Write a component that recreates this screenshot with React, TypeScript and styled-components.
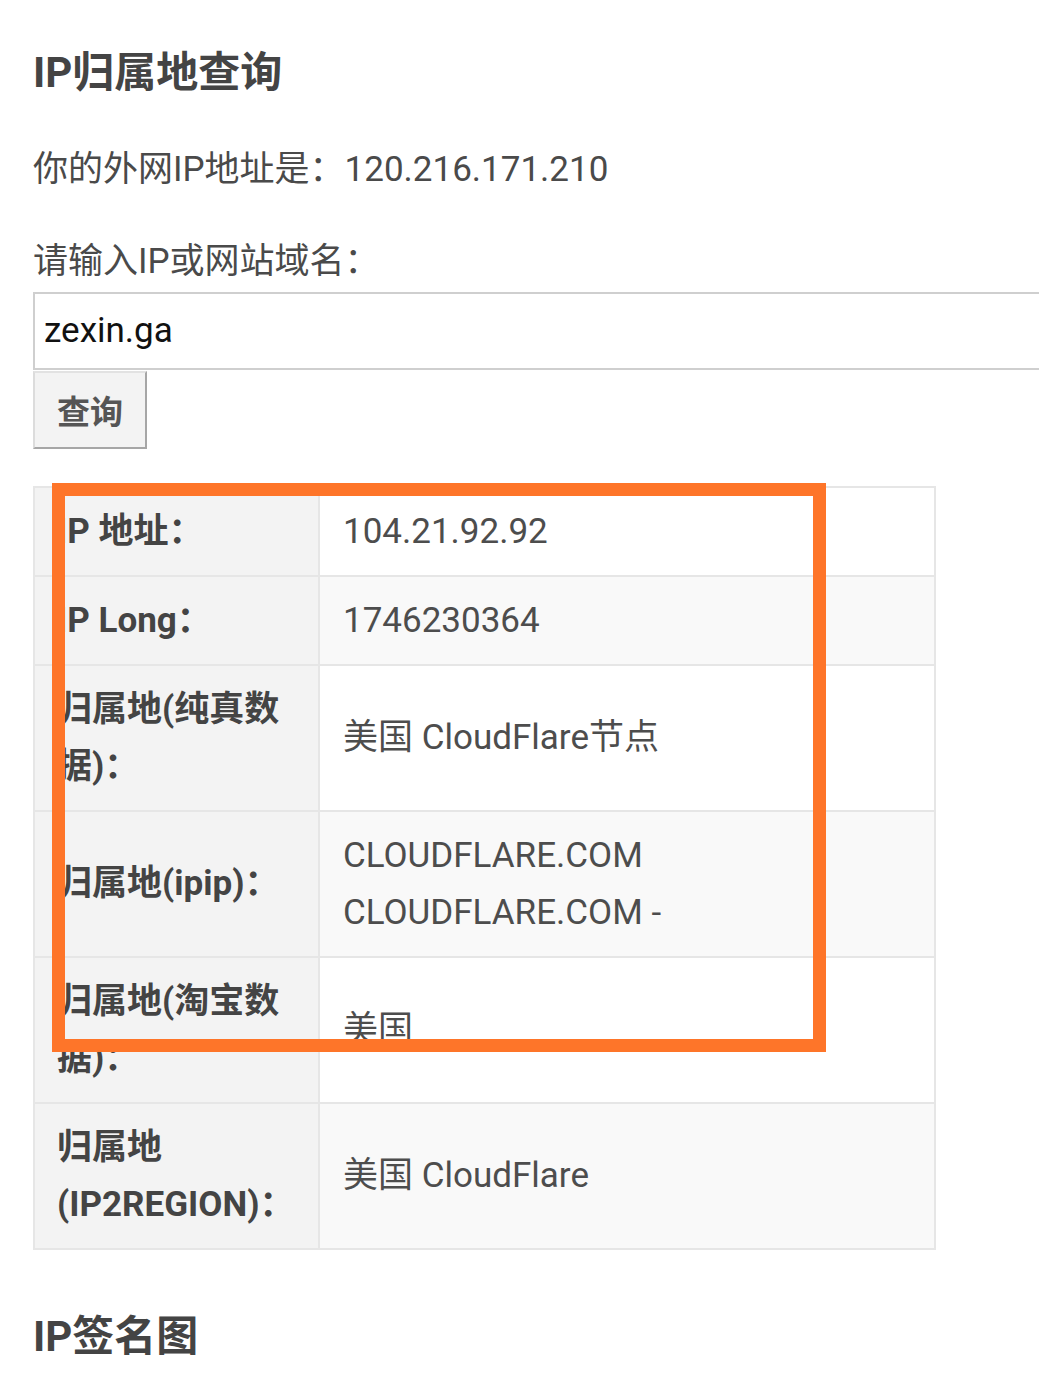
import React from "react";
import styled, { createGlobalStyle } from "styled-components";

const Global = createGlobalStyle`
  html, body { margin: 0; padding: 0; background: #fff; overflow: hidden; }
  body { font-family: "Roboto", "Noto Sans CJK SC", sans-serif; color: #4a4a4a; }
`;

const Page = styled.div`
  position: relative;
  width: 1039px;
  height: 1388px;
  overflow: hidden;
  padding-left: 33px;
  box-sizing: border-box;
  display: flex;
  flex-direction: column;
`;

const Heading = styled.h2<{ $top: number }>`
  margin: ${(p) => p.$top}px 0 0;
  font-size: 42px;
  line-height: 60px;
  font-weight: 700;
  color: #444;
`;

const Para = styled.div<{ $top: number }>`
  margin-top: ${(p) => p.$top}px;
  font-size: 35px;
  line-height: 57px;
  color: #4a4a4a;
`;

const Input = styled.input`
  margin-top: 1.5px;
  width: 1040px;
  height: 78px;
  box-sizing: border-box;
  border: 2px solid #cfcfcf;
  padding: 0 9px;
  font-family: "Roboto", "Noto Sans CJK SC", sans-serif;
  font-size: 35px;
  color: #111;
  outline: none;
  background: #fff;
`;

const Button = styled.button`
  margin-top: 1px;
  width: 114px;
  height: 78px;
  box-sizing: border-box;
  border: 2px solid;
  border-color: #e2e2e2 #a6a6a6 #a6a6a6 #dcdcdc;
  background: #f3f3f3;
  font-family: "Roboto", "Noto Sans CJK SC", sans-serif;
  font-size: 33px;
  font-weight: 700;
  color: #555;
  padding: 0;
`;

const Table = styled.table`
  margin-top: 37px;
  width: 903px;
  table-layout: fixed;
  border-collapse: collapse;
  border: 2px solid #e6e6e6;
  font-size: 35px;
  line-height: 57px;
`;

const LabelCol = styled.col`
  width: 285px;
`;

const Label = styled.td`
  padding: 15px 22px;
  background: #f3f3f3;
  border: 2px solid #e6e6e6;
  font-weight: 700;
  color: #444;
  vertical-align: middle;
`;

const Value = styled.td<{ $alt: boolean }>`
  padding: 15px 23px;
  background: ${(p) => (p.$alt ? "#f9f9f9" : "#fff")};
  border: 2px solid #e6e6e6;
  color: #4d4d4d;
  vertical-align: middle;
`;

const Highlight = styled.div`
  position: absolute;
  left: 52px;
  top: 483px;
  width: 774px;
  height: 569px;
  box-sizing: border-box;
  border: 13px solid #fe7529;
  pointer-events: none;
`;

const rows: [string, string][] = [
  ["IP 地址：", "104.21.92.92"],
  ["IP Long：", "1746230364"],
  ["归属地(纯真数据)：", "美国 CloudFlare节点"],
  ["归属地(ipip)：", "CLOUDFLARE.COM CLOUDFLARE.COM -"],
  ["归属地(淘宝数据)：", "美国"],
  ["归属地(IP2REGION)：", "美国 CloudFlare"],
];

export default function App() {
  return (
    <>
      <Global />
      <Page>
        <Heading $top={43}>IP归属地查询</Heading>
        <Para $top={38}>你的外网IP地址是：120.216.171.210</Para>
        <Para $top={35}>请输入IP或网站域名：</Para>
        <Input defaultValue="zexin.ga" />
        <div>
          <Button>查询</Button>
        </div>
        <Table>
          <colgroup>
            <LabelCol />
            <col />
          </colgroup>
          <tbody>
            {rows.map(([l, v], i) => (
              <tr key={l}>
                <Label>{l}</Label>
                <Value $alt={i % 2 === 1}>{v}</Value>
              </tr>
            ))}
          </tbody>
        </Table>
        <Heading $top={57}>IP签名图</Heading>
        <Highlight />
      </Page>
    </>
  );
}
